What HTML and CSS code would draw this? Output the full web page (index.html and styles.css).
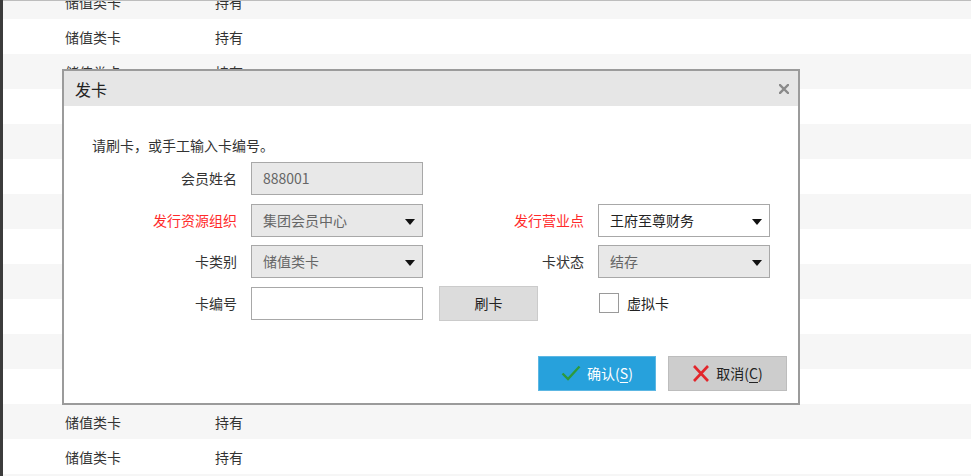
FILE: index.html
```html
<!DOCTYPE html>
<html lang="zh">
<head>
<meta charset="utf-8">
<link rel="stylesheet" href="styles.css">
</head>
<body>
<div class="page">
  <div class="list">
    <div class="row"><span class="c1">储值类卡</span><span class="c2">持有</span></div>
    <div class="row"><span class="c1">储值类卡</span><span class="c2">持有</span></div>
    <div class="row"><span class="c1">储值类卡</span><span class="c2">持有</span></div>
    <div class="row"><span class="c1">储值类卡</span><span class="c2">持有</span></div>
    <div class="row"><span class="c1">储值类卡</span><span class="c2">持有</span></div>
    <div class="row"><span class="c1">储值类卡</span><span class="c2">持有</span></div>
    <div class="row"><span class="c1">储值类卡</span><span class="c2">持有</span></div>
    <div class="row"><span class="c1">储值类卡</span><span class="c2">持有</span></div>
    <div class="row"><span class="c1">储值类卡</span><span class="c2">持有</span></div>
    <div class="row"><span class="c1">储值类卡</span><span class="c2">持有</span></div>
    <div class="row"><span class="c1">储值类卡</span><span class="c2">持有</span></div>
    <div class="row"><span class="c1">储值类卡</span><span class="c2">持有</span></div>
    <div class="row"><span class="c1">储值类卡</span><span class="c2">持有</span></div>
    <div class="row"><span class="c1">储值类卡</span><span class="c2">持有</span></div>
    <div class="row"><span class="c1">储值类卡</span><span class="c2">持有</span></div>
  </div>

  <div class="dialog">
    <div class="title">
      <span>发卡</span>
      <svg class="close" width="10" height="10" viewBox="0 0 10 10"><path d="M1 1 L9 9 M9 1 L1 9" stroke="#8a8a8a" stroke-width="2.4" stroke-linecap="square"/></svg>
    </div>
    <div class="body">
      <div class="hint">请刷卡，或手工输入卡编号。</div>
      <div class="form">
        <div class="lbl">会员姓名</div>
        <div class="field disabled">888001</div>
        <div></div><div></div>

        <div class="lbl red">发行资源组织</div>
        <div class="field disabled sel">集团会员中心<i class="arrow"></i></div>
        <div class="lbl red">发行营业点</div>
        <div class="field sel active">王府至尊财务<i class="arrow"></i></div>

        <div class="lbl">卡类别</div>
        <div class="field disabled sel">储值类卡<i class="arrow"></i></div>
        <div class="lbl">卡状态</div>
        <div class="field disabled sel">结存<i class="arrow"></i></div>

        <div class="lbl">卡编号</div>
        <div class="field"></div>
        <div class="swipe-cell"><div class="swipe">刷卡</div></div>
        <div class="check"><span class="box"></span><span>虚拟卡</span></div>
      </div>
      <div class="footer">
        <div class="btn ok">
          <svg width="20" height="18" viewBox="0 0 20 18"><path d="M1.5 9.5 L7 15 L18.5 2.5" fill="none" stroke="#2d9a3c" stroke-width="2.4"/></svg>
          <span>确认(<u>S</u>)</span>
        </div>
        <div class="btn cancel">
          <svg width="18" height="19" viewBox="0 0 18 19"><path d="M2 2 L16 17 M16 2 L2 17" stroke="#e2262b" stroke-width="2.6"/></svg>
          <span>取消(<u>C</u>)</span>
        </div>
      </div>
    </div>
  </div>
</div>
</body>
</html>
```

FILE: styles.css
```css
html, body {
  margin: 0;
  padding: 0;
  background: #fff;
}
body {
  font-family: "Noto Sans CJK SC", "Noto Sans", sans-serif;
  font-size: 14px;
  color: #333;
}
.page {
  position: relative;
  width: 971px;
  height: 476px;
  overflow: hidden;
  box-sizing: border-box;
  border-left: 3px solid #3c3c3c;
}
.page::before {
  content: "";
  position: absolute;
  left: 0; top: 0; right: 0;
  height: 1px;
  background: #bdbdbd;
  z-index: 1;
}
.list {
  margin-top: -16px;
}
.row {
  height: 35px;
  display: flex;
  align-items: center;
  background: #f6f6f6;
}
.row:nth-child(even) {
  background: #fff;
}
.c1 {
  margin-left: 62px;
  width: 150px;
}
.dialog {
  position: absolute;
  left: 59px;
  top: 69px;
  width: 734px;
  height: 332px;
  border: 2px solid #9b9b9b;
  background: #fff;
  display: flex;
  flex-direction: column;
}
.title {
  height: 35px;
  background: #e6e6e6;
  display: flex;
  align-items: center;
  justify-content: space-between;
  padding: 0 9px 0 11px;
  font-size: 16px;
  color: #222;
}
.body {
  padding-top: 29px;
}
.hint {
  padding-left: 28px;
  line-height: 20px;
  color: #333;
}
.form {
  margin-top: 7px;
  display: grid;
  grid-template-columns: 173px 172px 147px 172px;
  column-gap: 14px;
  grid-template-rows: repeat(4, 33px);
  row-gap: 8.5px;
}
.lbl {
  text-align: right;
  line-height: 33px;
  color: #333;
}
.red {
  color: #ff2a2a;
}
.field {
  box-sizing: border-box;
  height: 33px;
  border: 1px solid #a8a8a8;
  background: #fff;
  padding-left: 11px;
  line-height: 31px;
  position: relative;
  color: #222;
}
.field.disabled {
  background: #e8e8e8;
  color: #666;
}
.arrow {
  position: absolute;
  right: 7px;
  top: 14px;
  width: 0;
  height: 0;
  border-left: 5px solid transparent;
  border-right: 5px solid transparent;
  border-top: 6px solid #111;
}
.swipe-cell {
  display: flex;
  align-items: center;
  padding-left: 2px;
}
.swipe {
  width: 99px;
  height: 35px;
  box-sizing: border-box;
  border: 1px solid #cbcbcb;
  background: #dcdcdc;
  display: flex;
  align-items: center;
  justify-content: center;
  color: #222;
}
.check {
  display: flex;
  align-items: center;
  gap: 8px;
  padding-left: 1px;
  color: #222;
}
.box {
  width: 20px;
  height: 20px;
  box-sizing: border-box;
  border: 1px solid #9a9a9a;
  background: #fff;
}
.footer {
  margin-top: 36px;
  display: flex;
  justify-content: flex-end;
  gap: 12px;
  padding-right: 11px;
}
.btn {
  height: 35px;
  box-sizing: border-box;
  display: flex;
  align-items: center;
  justify-content: center;
  gap: 6px;
}
.btn u {
  text-underline-offset: 3px;
}
.ok {
  width: 118px;
  background: #27a1dc;
  border: 1px solid #5cb7e3;
  color: #fff;
}
.cancel {
  width: 119px;
  background: #cdcdcd;
  border: 1px solid #bdbdbd;
  color: #222;
}
```
